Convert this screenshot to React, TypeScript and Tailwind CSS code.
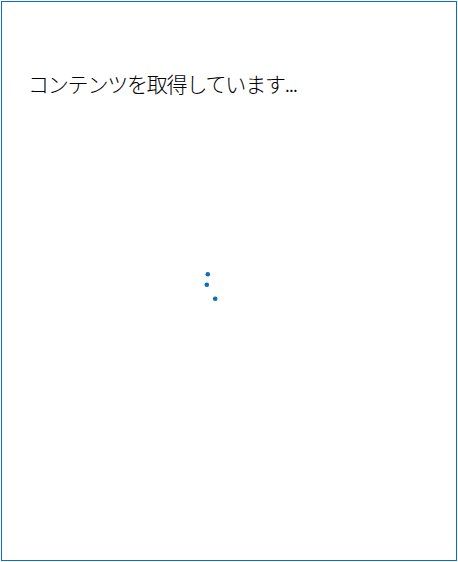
export default function App() {
  const dots = [
    { cx: 207.3 - 203.5, cy: 273.7 - 255.5 },
    { cx: 206.3 - 203.5, cy: 284.3 - 255.5 },
    { cx: 214.7 - 203.5, cy: 298.3 - 255.5 },
  ];
  return (
    <div className="w-[458px] h-[562px] bg-white p-px" style={{ fontFamily: '"Noto Sans CJK JP", "Noto Sans", sans-serif' }}>
      <div className="relative w-[456px] h-[560px] border border-[#0b6cc9] bg-white">
        <h1 className="pl-[26px] pt-[66px] text-[21px] leading-[30px] font-light text-black tracking-[-1.2px]">
          コンテンツを取得しています...
        </h1>
        <div className="absolute inset-0 flex items-center justify-center">
          <svg width="50" height="50" viewBox="0 0 50 50">
            {dots.map((d, i) => (
              <circle key={i} cx={d.cx} cy={d.cy} r="2.3" fill="#0f6cbd" />
            ))}
          </svg>
        </div>
      </div>
    </div>
  );
}
